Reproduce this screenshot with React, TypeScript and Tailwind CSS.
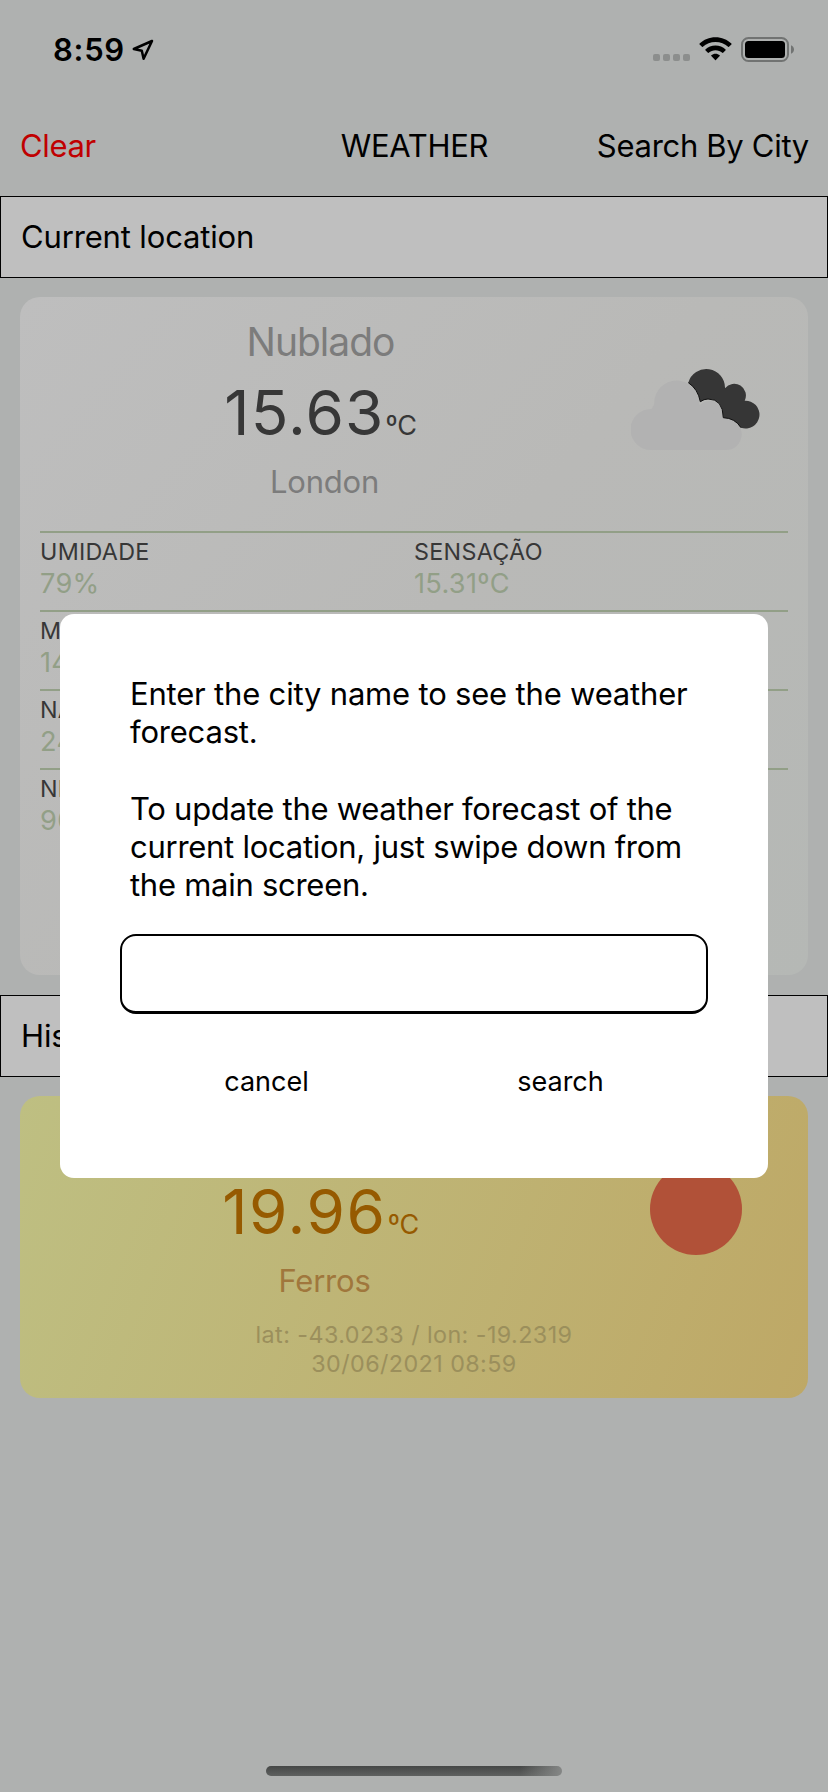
import type { ReactNode } from "react";

function StatusBar() {
  return (
    <div className="flex h-[100px] items-start pt-[30px] pl-[53px] pr-[34px]">
      <span className="h-[40px] text-[31px] font-semibold leading-[40px] tracking-[0.7px]">8:59</span>
      <svg className="ml-[7px] mt-[9px] h-[22px] w-[22px]" viewBox="0 0 22 22" fill="none">
        <path d="M20 2 L1.8 10 L9.8 11.8 L11.6 19.8 Z" stroke="#000" strokeWidth="2.5" strokeLinejoin="round" />
      </svg>
      <div className="ml-auto flex items-start">
        <div className="mt-[24px] flex gap-[3px]">
          {[0, 1, 2, 3].map((i) => (
            <span key={i} className="h-[7px] w-[7px] rounded-[2px] bg-[#8c8e8d]" />
          ))}
        </div>
        <svg className="ml-[9px] mt-[7px] h-[24px] w-[33px]" viewBox="0 0 33 24">
          <path d="M16.5 0.3 C10.3 0.3 4.7 2.7 0.6 6.6 Q0.2 7 0.6 7.4 L3 9.8 Q3.4 10.2 3.9 9.8 C7.2 6.7 11.6 4.9 16.5 4.9 C21.4 4.9 25.8 6.7 29.1 9.8 Q29.6 10.2 30 9.8 L32.4 7.4 Q32.8 7 32.4 6.6 C28.3 2.7 22.7 0.3 16.5 0.3 Z" />
          <path d="M16.5 8.6 C12.6 8.6 9 10.1 6.4 12.5 Q6 12.9 6.4 13.3 L8.9 15.8 Q9.3 16.1 9.7 15.8 C11.5 14.2 13.9 13.2 16.5 13.2 C19.1 13.2 21.5 14.2 23.3 15.8 Q23.7 16.1 24.1 15.8 L26.6 13.3 Q27 12.9 26.6 12.5 C24 10.1 20.4 8.6 16.5 8.6 Z" />
          <path d="M16.5 16.8 C14.9 16.8 13.4 17.4 12.3 18.3 Q11.9 18.7 12.3 19.1 L16.1 23.1 Q16.5 23.5 16.9 23.1 L20.7 19.1 Q21.1 18.7 20.7 18.3 C19.6 17.4 18.1 16.8 16.5 16.8 Z" />
        </svg>
        <svg className="ml-[9px] mt-[7px] h-[25px] w-[53px]" viewBox="0 0 53 25">
          <rect x="1" y="1" width="46" height="23" rx="6.5" fill="none" stroke="#717372" strokeWidth="2" />
          <rect x="4" y="4" width="40" height="17" rx="3.5" />
          <path d="M50 8.2 C54 9.5 54 15.5 50 16.8 Z" fill="#717372" />
        </svg>
      </div>
    </div>
  );
}

function SectionBar({ children }: { children: ReactNode }) {
  return (
    <div className="flex h-[82px] shrink-0 items-start border border-black bg-[#bfbfbf] pl-[20px] pt-[20px] text-[31px] leading-[40px] tracking-[-0.15px]">
      {children}
    </div>
  );
}

type SummaryProps = {
  condition: string;
  temperature: string;
  city: string;
  muted: string;
  strong: string;
  icon: ReactNode;
};

function Summary({ condition, temperature, city, muted, strong, icon }: SummaryProps) {
  return (
    <div className="flex items-center">
      <div className="flex w-3/4 flex-col items-center">
        <div className={`h-[48px] text-[39px] leading-[48px] tracking-[-1px] ${muted}`}>{condition}</div>
        <div className={`mt-[9px] flex h-[76px] items-baseline ${strong}`}>
          <span className="text-[62px] leading-[76px]">{temperature}</span>
          <span className="ml-[1px] text-[27px] leading-[34px] tracking-[-0.4px]">ºC</span>
        </div>
        <div className={`mt-[12px] h-[38px] pl-[8px] text-[31px] leading-[38px] tracking-[-0.2px] ${muted}`}>{city}</div>
      </div>
      <div className="flex w-1/4 justify-center">{icon}</div>
    </div>
  );
}

function Clouds() {
  return (
    <svg className="ml-[3px] h-[82px] w-[131px]" viewBox="0 0 131 82">
      <g fill="#b2b2b2">
        <circle cx="20" cy="60.5" r="20.5" />
        <circle cx="45.7" cy="34" r="22.5" />
        <circle cx="79" cy="47" r="15" />
        <circle cx="95" cy="65.3" r="15.7" />
        <path d="M20 41 L24 34 H66 L94 52 V81 H20 Z" />
      </g>
      <path
        fill="#363636"
        d="M57.3 13.7 A18.7 18.7 0 0 1 94 19.3 A11.7 11.7 0 0 1 113.7 31.7 A13.9 13.9 0 1 1 110 58.7 Q104 49 92.3 48.7 Q92 30 77 30 Q73 30 69.3 32.7 Q67 20 57.3 13.7 Z"
      />
      <path
        d="M57.3 13.7 Q67 20 69.3 32.7 Q73 30 77 30 Q92 30 92.3 48.7 Q104 49 110 58.7"
        fill="none"
        stroke="#101010"
        strokeWidth="1"
      />
    </svg>
  );
}

function Sun() {
  return (
    <svg className="ml-[2px] h-[92px] w-[92px]" viewBox="0 0 92 92">
      <circle cx="46" cy="46" r="46" fill="#b15138" />
    </svg>
  );
}

const details = [
  [["UMIDADE", "79%"], ["SENSAÇÃO", "15.31ºC"]],
  [["MIN", "14º"]],
  [["NASC", "24"]],
  [["NEB", "90%"]],
];

function SearchDialog() {
  return (
    <div role="dialog" className="absolute left-[60px] top-[614px] flex h-[564px] w-[708px] flex-col rounded-[14px] bg-white px-[60px] pt-[61px]">
      <div className="whitespace-nowrap pl-[10px] text-[31px] leading-[38.2px]">
        <p className="tracking-[-0.19px]">
          Enter the city name to see the weather
          <br />
          forecast.
        </p>
        <p className="mt-[38.2px] tracking-[-0.27px]">
          To update the weather forecast of the
          <br />
          current location, just swipe down from
          <br />
          the main screen.
        </p>
      </div>
      <input
        aria-label="City"
        className="mt-[30px] h-[80px] w-full shrink-0 rounded-[16px] border-2 border-b-[3px] border-black bg-white px-4 text-[31px] outline-none"
      />
      <div className="mt-[49px] flex text-[27px] leading-[38px]">
        <button className="w-1/2 pr-[1px] text-center">cancel</button>
        <button className="w-1/2 pr-[1px] text-center">search</button>
      </div>
    </div>
  );
}

export default function App() {
  return (
    <div className="relative flex h-[1792px] w-[828px] flex-col overflow-hidden bg-[#afb1b0] font-['Inter','Noto_Sans',sans-serif] text-black">
      <StatusBar />
      <header className="grid h-[96px] shrink-0 grid-cols-3 items-start pl-[20px] pr-[19px] pt-[26px] text-[31px] leading-[40px]">
        <span className="text-left text-[#c00000] tracking-[-0.35px]">Clear</span>
        <span className="text-center tracking-[-0.3px]">WEATHER</span>
        <span className="whitespace-nowrap text-right tracking-[-0.3px]">Search By City</span>
      </header>

      <SectionBar>Current location</SectionBar>
      <section className="mx-[20px] mt-[19px] h-[678px] shrink-0 rounded-[20px] bg-linear-131 from-[#bebebe] via-[#b9b9b7] via-50% to-[#b5b8b5] px-[20px] pt-[21px]">
        <Summary
          condition="Nublado"
          temperature="15.63"
          city="London"
          muted="text-[#7c7c7c]"
          strong="text-[#373737] tracking-[1.2px]"
          icon={<Clouds />}
        />
        <div className="mt-[30px]">
          {details.map((row) => (
            <div key={row[0][0]} className="grid h-[79px] grid-cols-2 border-t-2 border-[#929f87] pt-[4px]">
              {row.map(([label, value]) => (
                <div key={label}>
                  <div className="h-[30px] text-[23.3px] leading-[29px] tracking-[0.3px] text-[#373737]">{label}</div>
                  <div className="h-[33px] text-[27.2px] leading-[33px] tracking-[0.3px] text-[#929f87]">{value}</div>
                </div>
              ))}
            </div>
          ))}
        </div>
      </section>

      <div className="h-[20px] shrink-0" />
      <SectionBar>History</SectionBar>
      <section className="mx-[20px] mt-[19px] h-[302px] shrink-0 rounded-[20px] bg-linear-111 from-[#bebf82] to-[#bea866] px-[20px] pt-[21px]">
        <Summary
          condition="Limpo"
          temperature="19.96"
          city="Ferros"
          muted="text-[#a0773c]"
          strong="text-[#965a00] tracking-[1.6px]"
          icon={<Sun />}
        />
        <div className="mt-[20px] text-center text-[23.3px] leading-[29px] tracking-[0.43px] text-[#9b8f5c]">
          <div>lat: -43.0233 / lon: -19.2319</div>
          <div>30/06/2021 08:59</div>
        </div>
      </section>

      <div className="mx-auto mb-[16px] mt-auto h-[10px] w-[296px] rounded-full bg-[linear-gradient(to_right,transparent_86%,#858786),linear-gradient(to_bottom,#454746,#5e605f)]" />
      <SearchDialog />
    </div>
  );
}
